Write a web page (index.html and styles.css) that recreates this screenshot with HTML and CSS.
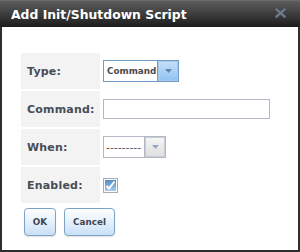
FILE: index.html
```html
<!DOCTYPE html>
<html>
<head>
<meta charset="utf-8">
<link rel="stylesheet" href="styles.css">
</head>
<body>
<div class="dialog">
  <div class="titlebar">
    <span class="title">Add Init/Shutdown Script</span>
    <svg class="close" width="11" height="10" viewBox="0 0 11 10">
      <path d="M1.5 1.5 L9.5 8.5 M9.5 1.5 L1.5 8.5" stroke="#444c56" stroke-width="3.4" stroke-linecap="square"/>
      <path d="M1.5 1.5 L9.5 8.5 M9.5 1.5 L1.5 8.5" stroke="#6f7d8c" stroke-width="2" stroke-linecap="square"/>
    </svg>
  </div>
  <div class="content">
    <div class="form">
      <div class="label">Type:</div>
      <div class="value">
        <div class="select focused">
          <span class="sel-text">Command</span>
          <span class="sel-btn"><svg width="7" height="4" viewBox="0 0 7 4"><path d="M0 0 H7 L3.5 4 Z" fill="#5f86ad"/></svg></span>
        </div>
      </div>
      <div class="label">Command:</div>
      <div class="value"><div class="input"></div></div>
      <div class="label">When:</div>
      <div class="value">
        <div class="select plain">
          <span class="sel-text dashes">---------</span>
          <span class="sel-btn"><svg width="7" height="4" viewBox="0 0 7 4"><path d="M0 0 H7 L3.5 4 Z" fill="#98a8c2"/></svg></span>
        </div>
      </div>
      <div class="label">Enabled:</div>
      <div class="value">
        <svg class="check" width="15" height="15" viewBox="0 0 15 15">
          <defs>
            <linearGradient id="cb" x1="0" y1="0" x2="0" y2="1">
              <stop offset="0" stop-color="#4f8cc4"/>
              <stop offset="1" stop-color="#a9cbea"/>
            </linearGradient>
          </defs>
          <rect x="0.5" y="0.5" width="14" height="14" fill="#fff" stroke="#a4acb9"/>
          <rect x="2" y="2" width="11" height="11" fill="url(#cb)"/>
          <path d="M3.5 8 L6 10.5 L11.5 3.5" fill="none" stroke="#fff" stroke-width="2"/>
        </svg>
      </div>
    </div>
    <div class="buttons">
      <button class="btn ok">OK</button>
      <button class="btn cancel">Cancel</button>
    </div>
  </div>
</div>
</body>
</html>
```
FILE: styles.css
```css
html, body {
  margin: 0;
  padding: 0;
  background: #fff;
}
body {
  font-family: "DejaVu Sans", sans-serif;
}
.dialog {
  width: 300px;
  height: 252px;
  box-sizing: border-box;
  border: 2px solid #2e2e2e;
  border-top: none;
  background: #fff;
  display: flex;
  flex-direction: column;
}
.titlebar {
  height: 27px;
  flex: none;
  box-sizing: border-box;
  margin: 0 -2px;
  padding: 0 14px 0 11px;
  background: linear-gradient(#5d5d5d 0, #4a4a4a 30%, #2c2c2c 75%, #1c1c1c 100%);
  border-top: 1px solid #6a6a6a;
  display: flex;
  align-items: center;
  justify-content: space-between;
}
.title {
  color: #fff;
  font-weight: bold;
  font-size: 12.4px;
  margin-top: 1px;
}
.close {
  display: block;
  margin-top: -2px;
}
.content {
  padding: 26px 0 0 19px;
}
.form {
  display: grid;
  grid-template-columns: 79px auto;
  grid-auto-rows: 36px;
  row-gap: 2px;
}
.label {
  background: #f3f3f3;
  color: #474d57;
  font-weight: bold;
  font-size: 11px;
  letter-spacing: 0.2px;
  padding-left: 6px;
  display: flex;
  align-items: center;
}
.value {
  padding-left: 3px;
  display: flex;
  align-items: center;
}
.select {
  display: flex;
  height: 22px;
  box-sizing: border-box;
  border: 1px solid #b2b8c4;
  background: #fff;
}
.select.focused {
  width: 76px;
  border-color: #6f9cc5;
}
.select.plain {
  width: 63px;
}
.sel-text {
  flex: 1;
  display: flex;
  align-items: center;
  padding-left: 3px;
  font-size: 8.8px;
  font-weight: bold;
  color: #4a4a4a;
}
.sel-text.dashes {
  font-weight: normal;
  color: #555;
  font-size: 10.8px;
  letter-spacing: 0;
  padding-left: 2px;
}
.sel-btn {
  width: 21px;
  flex: none;
  box-sizing: border-box;
  border-left: 1px solid #b2b8c4;
  display: flex;
  align-items: center;
  justify-content: center;
}
.focused .sel-btn {
  border-left-color: #6f9cc5;
  background: linear-gradient(#c6e0fa, #8fc2f3);
  box-shadow: inset 0 0 0 1px #a9c7e6;
}
.plain .sel-btn {
  background: linear-gradient(#f7f7f7, #dedede);
  box-shadow: inset 0 0 0 1px #c9cdd3;
}
.input {
  width: 167px;
  height: 20px;
  box-sizing: border-box;
  border: 1px solid #b2b8c4;
  background: #fff;
}
.check {
  display: block;
}
.buttons {
  display: flex;
  gap: 8px;
  padding: 5px 0 0 3px;
}
.btn {
  height: 28px;
  box-sizing: border-box;
  border: 1px solid #7da3c9;
  border-radius: 4px;
  background: linear-gradient(#ffffff 0, #e8f2fc 45%, #c9e0f7 100%);
  font-family: "DejaVu Sans", sans-serif;
  font-weight: bold;
  font-size: 8.8px;
  color: #3f4550;
  padding: 0;
  margin: 0;
  box-shadow: 0 1px 1px rgba(0,0,0,0.12);
}
.ok {
  width: 32px;
}
.cancel {
  width: 51px;
}
```
